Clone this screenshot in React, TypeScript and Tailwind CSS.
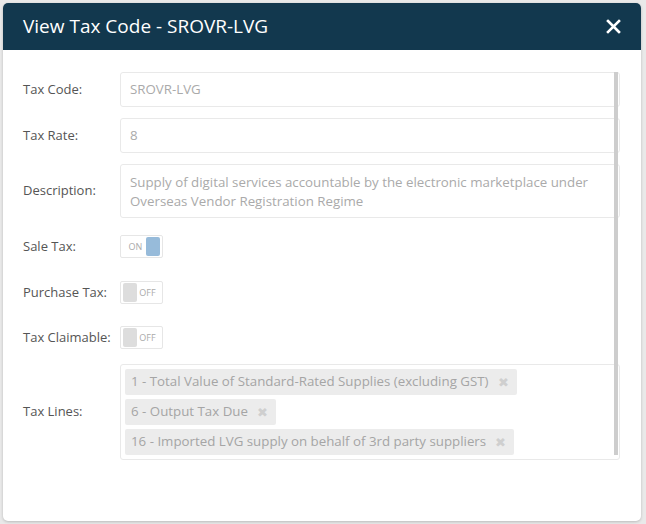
import React from "react";

const font = { fontFamily: '"Open Sans", "Noto Sans", sans-serif' };

function Row({ label, children, className = "" }: { label: string; children: React.ReactNode; className?: string }) {
  return (
    <div className={`flex items-center ${className}`}>
      <div className="w-[97px] shrink-0 text-[13px] text-[#555]">{label}</div>
      <div className="flex-1">{children}</div>
    </div>
  );
}

function Input({ children, tall = false }: { children: React.ReactNode; tall?: boolean }) {
  return (
    <div
      className={`border border-[#e9e9e9] rounded-[3px] px-[9px] text-[13.3px] text-[#aaa] ${
        tall ? "h-[54px] pt-[8px] leading-[19px]" : "h-[35px] flex items-center"
      }`}
    >
      {children}
    </div>
  );
}

function Toggle({ on }: { on: boolean }) {
  return (
    <div className="w-[43px] h-[23px] border border-[#e6e6e6] rounded-[2px] flex items-center px-[2px] text-[9px] text-[#aaa]">
      {on ? (
        <>
          <span className="flex-1 text-center pl-[2px]">ON</span>
          <span className="w-[14px] h-[19px] bg-[#97bbda] rounded-[2px]" />
        </>
      ) : (
        <>
          <span className="w-[14px] h-[19px] bg-[#dddddd] rounded-[2px]" />
          <span className="flex-1 text-center pr-[2px]">OFF</span>
        </>
      )}
    </div>
  );
}

function Tag({ text }: { text: string }) {
  return (
    <div className="inline-flex items-center h-[26px] bg-[#ececec] rounded-[2px] pl-[6px] pr-[8px] text-[13.3px] text-[#a5a5a5]">
      <span>{text}</span>
      <span className="ml-[9px] text-[#cfcfcf] text-[13px] leading-none">✖</span>
    </div>
  );
}

export default function App() {
  return (
    <div className="w-[646px] h-[524px] bg-[#e9e9e9] p-[3px] pr-[5px] pb-[3px]" style={font}>
      <div className="w-[638px] h-[518px] bg-white rounded-[5px] overflow-hidden shadow-[0_1px_3px_rgba(0,0,0,0.2)] flex flex-col">
        <div className="h-[47px] bg-[#12384e] flex items-center justify-between pl-[20px] pr-[20px] shrink-0">
          <span className="text-white text-[19px]">View Tax Code - SROVR-LVG</span>
          <svg width="15" height="15" viewBox="0 0 15 15">
            <path d="M2 2 L13 13 M13 2 L2 13" stroke="white" strokeWidth="2.6" strokeLinecap="square" />
          </svg>
        </div>
        <div className="relative pl-[20px] pr-[21px] pt-[22px]">
          <div className="flex flex-col">
            <Row label="Tax Code:">
              <Input>SROVR-LVG</Input>
            </Row>
            <Row label="Tax Rate:" className="mt-[11px]">
              <Input>8</Input>
            </Row>
            <Row label="Description:" className="mt-[11px]">
              <Input tall>
                Supply of digital services accountable by the electronic marketplace under Overseas Vendor Registration Regime
              </Input>
            </Row>
            <Row label="Sale Tax:" className="mt-[11px] h-[35px]">
              <Toggle on />
            </Row>
            <Row label="Purchase Tax:" className="mt-[11px] h-[35px]">
              <Toggle on={false} />
            </Row>
            <Row label="Tax Claimable:" className="mt-[10px] h-[35px]">
              <Toggle on={false} />
            </Row>
            <Row label="Tax Lines:" className="mt-[9px]">
              <div className="border border-[#e9e9e9] rounded-[3px] h-[96px] px-[4px] pt-[4px] flex flex-col items-start gap-[4px]">
                <Tag text="1 - Total Value of Standard-Rated Supplies (excluding GST)" />
                <Tag text="6 - Output Tax Due" />
                <Tag text="16 - Imported LVG supply on behalf of 3rd party suppliers" />
              </div>
            </Row>
          </div>
          <div className="absolute right-[23px] top-[22px] w-[4px] h-[383px] bg-[#cdcdcd]" />
        </div>
      </div>
    </div>
  );
}
